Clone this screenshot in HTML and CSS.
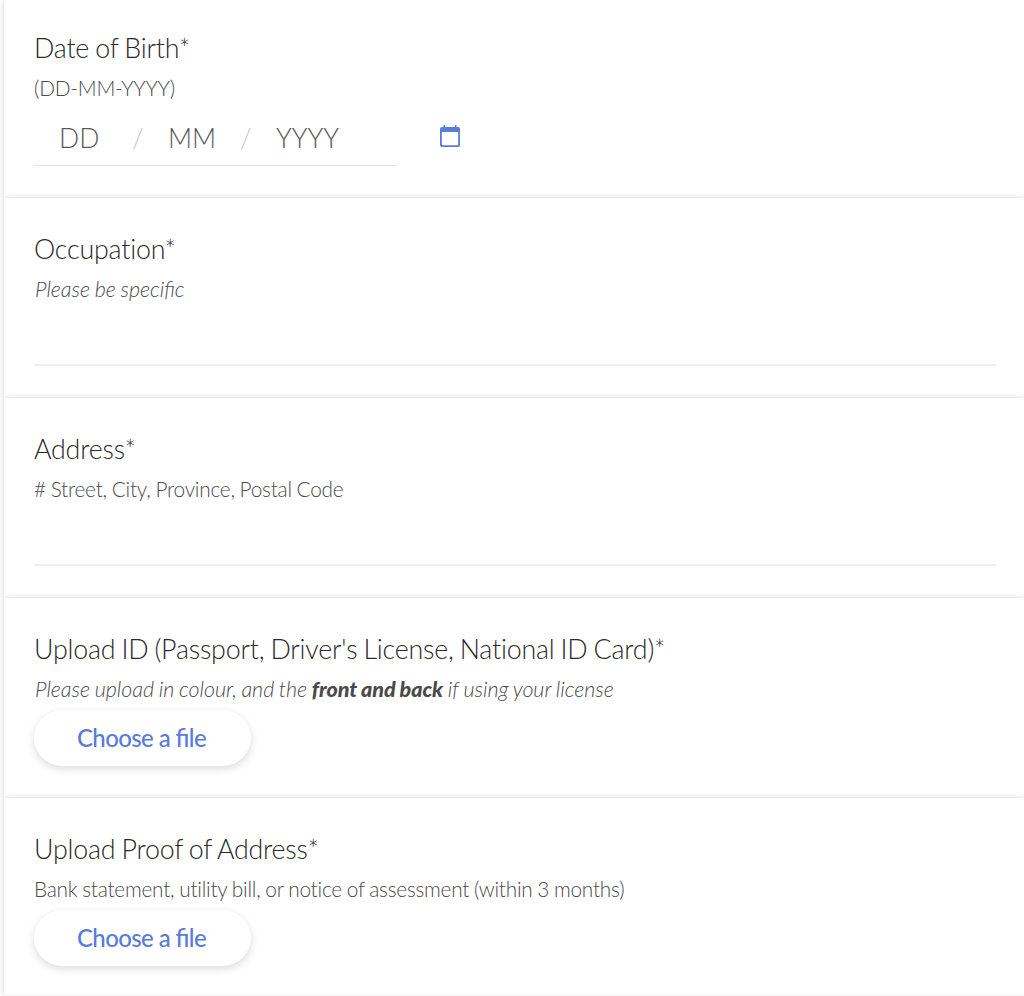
FILE: index.html
```html
<!DOCTYPE html>
<html lang="en">
<head>
    <meta charset="UTF-8">
    <meta name="viewport" content="width=device-width, initial-scale=1.0">
    <title>Application Form</title>
    <link rel="stylesheet" href="styles.css">
</head>
<body>
    <form class="form">
        <section class="card card-date">
            <h2>Date of Birth*</h2>
            <p class="hint">(DD-MM-YYYY)</p>
            <div class="date-row">
                <div class="date-input">
                    <span class="day">DD</span>
                    <span class="slash">/</span>
                    <span class="month">MM</span>
                    <span class="slash">/</span>
                    <span class="year">YYYY</span>
                </div>
                <svg class="calendar" width="20" height="22" viewBox="0 0 20 22">
                    <path fill="#5b7bdc" fill-rule="evenodd" d="M3.500 0h1.600v2h9.800V0h1.600v2H18a2 2 0 0 1 2 2v16a2 2 0 0 1-2 2H2a2 2 0 0 1-2-2V4a2 2 0 0 1 2-2h1.500zM1.800 7v12.200a1 1 0 0 0 1 1h14.400a1 1 0 0 0 1-1V7z"/>
                </svg>
            </div>
        </section>

        <section class="card">
            <h2>Occupation*</h2>
            <p class="hint italic">Please be specific</p>
            <div class="text-line"></div>
        </section>

        <section class="card">
            <h2>Address*</h2>
            <p class="hint"># Street, City, Province, Postal Code</p>
            <div class="text-line"></div>
        </section>

        <section class="card">
            <h2>Upload ID (Passport, Driver's License, National ID Card)*</h2>
            <p class="hint italic">Please upload in colour, and the <b>front and back</b> if using your license</p>
            <button type="button" class="file-btn">Choose a file</button>
        </section>

        <section class="card card-last">
            <h2>Upload Proof of Address*</h2>
            <p class="hint">Bank statement, utility bill, or notice of assessment (within 3 months)</p>
            <button type="button" class="file-btn">Choose a file</button>
        </section>
    </form>
</body>
</html>
```
FILE: styles.css
```css
* {
    box-sizing: border-box;
}

body {
    margin: 0;
    font-family: 'Lato', sans-serif;
    font-weight: 300;
    background-color: #fff;
    color: #2a2a2a;
    height: 996px;
    overflow: hidden;
}

.form {
    padding-left: 4px;
}

.card {
    height: 200px;
    padding: 33px 28px 0 30px;
    background-color: #fff;
    box-shadow: 0 0 6px rgba(0, 0, 0, 0.17);
}

.card-date {
    height: 198px;
    padding-top: 30px;
}

.card-last {
    height: 198px;
    border-bottom: 2px solid #f7f7f7;
}

h2 {
    margin: 0;
    font-size: 26.8px;
    font-weight: 300;
    line-height: 36px;
    letter-spacing: -0.2px;
    word-spacing: -1px;
}

.hint {
    margin: 6px 0 0;
    font-size: 20.8px;
    line-height: 32px;
    letter-spacing: -0.23px;
    word-spacing: -0.6px;
    color: #4a4a4a;
}

.italic {
    padding-left: 1px;
    font-size: 21.5px;
    font-style: italic;
    letter-spacing: -0.05px;
    word-spacing: -0.6px;
    font-feature-settings: 'liga' 1;
}

.hint b {
    font-weight: 900;
}

.date-row {
    display: flex;
}

.date-input {
    display: flex;
    width: 362px;
    height: 62px;
    padding: 16px 0 0 25px;
    border-bottom: 1px solid #e2e2e2;
    font-size: 26.5px;
    line-height: 36px;
    color: #5a5a5a;
}

.day {
    width: 73px;
}

.month {
    width: 72px;
}

.slash {
    width: 36px;
    color: #c4c4c4;
}

.calendar {
    margin: 21px 0 0 44px;
}

.text-line {
    height: 61px;
    border-bottom: 2px solid #eee;
}

.file-btn {
    display: block;
    width: 217px;
    height: 56px;
    margin-top: 5px;
    padding: 0 2px 2px 0;
    border: 0;
    border-radius: 28px;
    background-color: #fff;
    box-shadow: 0 3px 8px rgba(0, 0, 0, 0.14);
    font-family: inherit;
    font-size: 24px;
    font-weight: 500;
    letter-spacing: -0.6px;
    font-feature-settings: 'liga' 1;
    color: #5b7bdc;
}
```
